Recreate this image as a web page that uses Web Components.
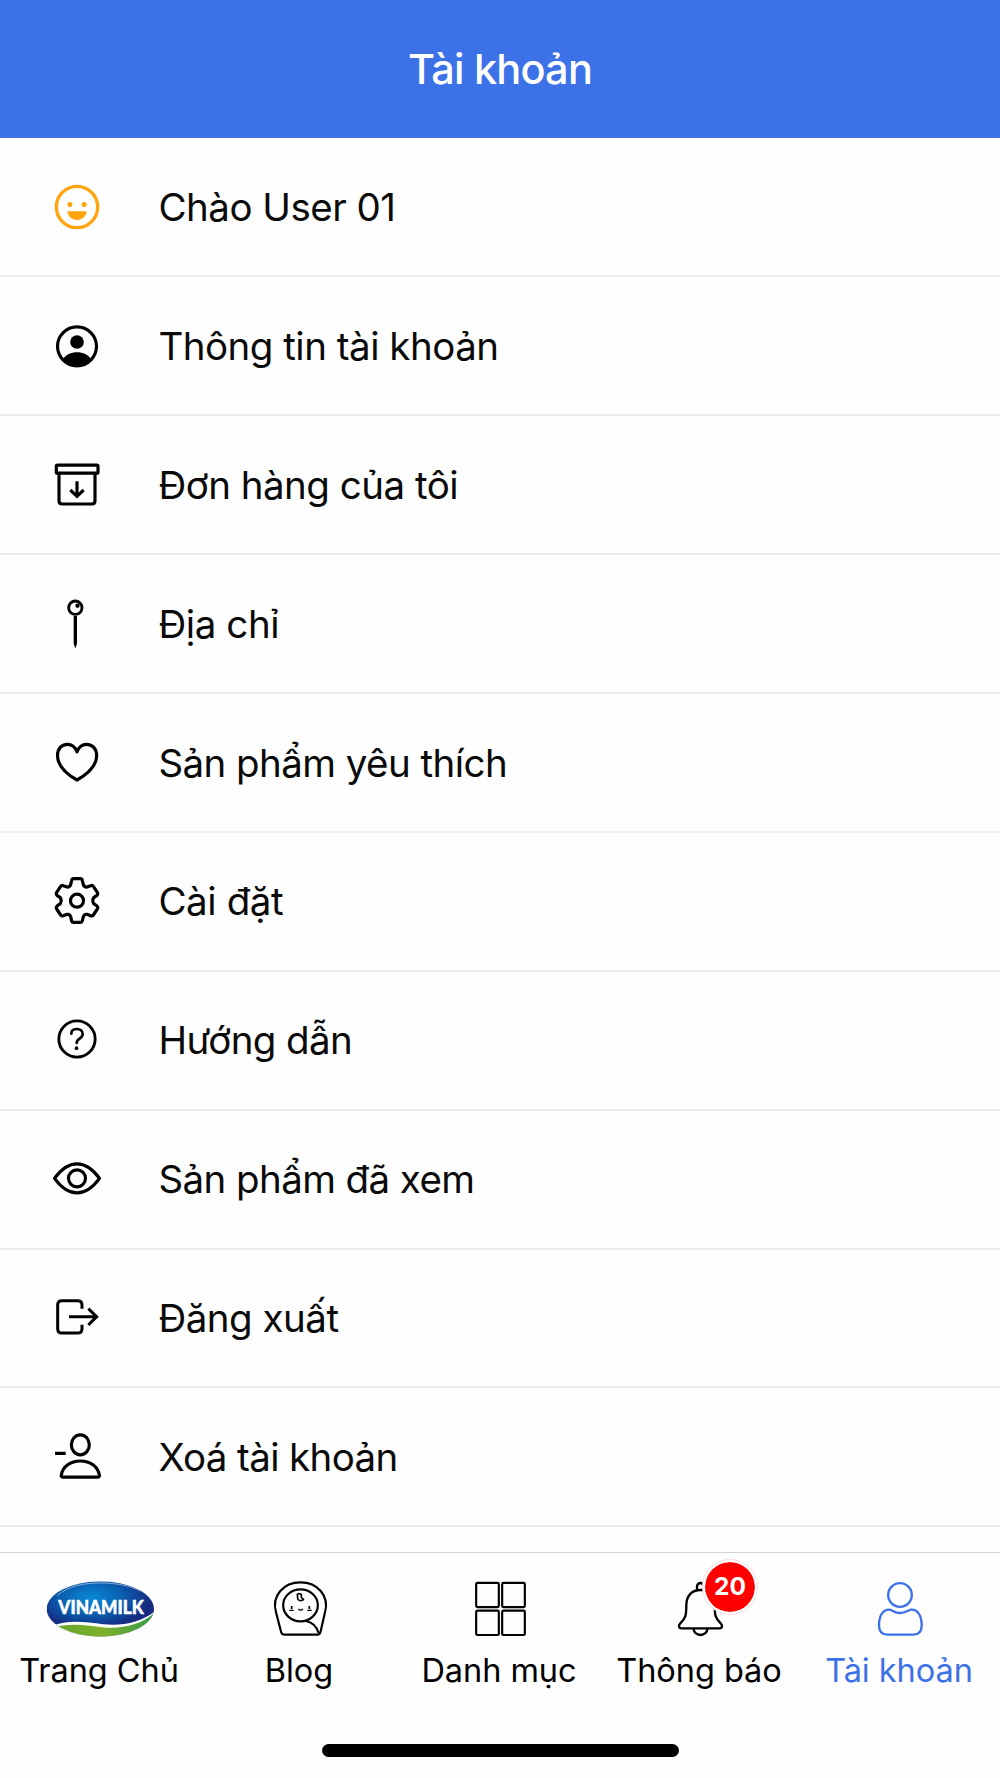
<!DOCTYPE html>
<html lang="vi">
<head>
<meta charset="UTF-8">
<title>Tài khoản</title>
<style>
    body {
        margin: 0;
        background: #fefefe;
        color: #0a0a0a;
        font-family: Inter, "Noto Sans", sans-serif;
    }
</style>
</head>
<body>
<account-screen></account-screen>

<script>
const MENU_ICONS = {
    smile: `<svg viewBox="51 49 180 180"><circle cx="141" cy="139" r="62" stroke-width="10"/><g fill="currentColor" stroke="none"><circle cx="119.5" cy="131.5" r="7.5"/><circle cx="162.5" cy="131.5" r="7.5"/><path d="M112 152H170C168 168 157 178 141 178S114 168 112 152Z"/></g></svg>`,
    profile: `<svg viewBox="51 466 180 180"><circle cx="141" cy="557" r="58.5" stroke-width="9.5"/><g fill="currentColor" stroke="none"><circle cx="141" cy="544" r="20.5"/><path d="M98 597C108 581 123 575 141 575S174 581 184 597A59 59 0 0 1 98 597Z"/></g></svg>`,
    archive: `<svg viewBox="51 73 180 180"><g stroke-width="9.5"><rect x="79" y="103.5" width="125" height="24" rx="3"/><path d="M87 129V210Q87 220 97 220H185Q195 220 195 210V129M141 152V196M121 178L141 197L161 178"/></g></svg>`,
    pin: `<svg viewBox="51 490 180 180"><circle cx="136" cy="531" r="20" stroke-width="8.5"/><g fill="currentColor" stroke="none"><circle cx="142.5" cy="525" r="6.5"/><path d="M131 556H141V640L136 653L131 640Z"/></g></svg>`,
    heart: `<svg viewBox="51 67.5 180 180"><path stroke-width="9.5" stroke-linejoin="round" d="M141 208.5C110 191 82.5 166 82.5 135C82.5 115 95 101.5 112 101.5C125 101.5 135 108 141 124C147 108 157 101.5 170 101.5C187 101.5 200 115 200 135C200 166 172 191 141 208.5Z"/></svg>`,
    gear: `<svg viewBox="51 485 180 180"><g stroke-width="9.5" stroke-linejoin="round"><circle cx="141" cy="574" r="19.5"/><path d="M131 508H151Q156 508 157 513L160 526Q163 534 171 533L182 529Q187 527 190 531L202 549Q205 554 201 558L191 565Q186 573 191 583L201 590Q205 594 202 599L190 617Q187 621 182 619L171 615Q163 614 160 622L157 635Q156 639 151 639H131Q126 639 125 635L122 622Q119 614 111 615L100 619Q95 621 92 617L80 599Q77 594 81 590L91 583Q96 573 91 565L81 558Q77 554 80 549L92 531Q95 527 100 529L111 533Q119 534 122 526L125 513Q126 508 131 508Z"/></g></svg>`,
    help: `<svg viewBox="51 62 180 180"><circle cx="141" cy="149" r="54.5" stroke-width="8.5"/><path stroke-width="8" stroke-linecap="round" d="M124 133C124 123 131 119 140 119C151 119 158 125 158 134C158 149 140 147 140 161"/><circle cx="139.5" cy="176.5" r="5.5" fill="currentColor" stroke="none"/></svg>`,
    eye: `<svg viewBox="51 479 180 180"><g stroke-width="9.5" stroke-linejoin="round"><path d="M73.5 567C91 543 115 523.5 141 523.5S191 543 208.5 567C191 591 167 610.5 141 610.5S91 591 73.5 567Z"/><circle cx="141" cy="567" r="25.5"/></g></svg>`,
    logout: `<svg viewBox="51 56 180 180"><g stroke-width="9"><path d="M156 118V107Q156 94 143 94H96Q83 94 83 107V178Q83 191 96 191H143Q156 191 156 178V166"/><path d="M117 142H199M175 118L200 142L175 167"/></g></svg>`,
    removeUser: `<svg viewBox="51 473 180 180"><g stroke-width="9.5" stroke-linejoin="round"><ellipse cx="151" cy="526.5" rx="27" ry="30"/><path d="M75 552H107M98 623.5C94 623.5 93 620 94 616C99 592 121 575 151 575S203 592 208 616C209 620 208 623.5 204 623.5Z"/></g></svg>`
};

const TAB_ICONS = {
    home: `<svg viewBox="120 117 360 180">
        <defs>
            <radialGradient id="blue" cx=".42" cy=".3" r=".55"><stop offset="0" stop-color="#0a8ad6"/><stop offset=".55" stop-color="#0a5cae"/><stop offset="1" stop-color="#152a80"/></radialGradient>
            <linearGradient id="green" x1="0" x2="1" y1="0" y2="0"><stop offset="0" stop-color="#62a52c"/><stop offset=".5" stop-color="#7fb02c"/><stop offset="1" stop-color="#2f9c46"/></linearGradient>
            <clipPath id="oval"><ellipse cx="301" cy="207" rx="161" ry="83"/></clipPath>
        </defs>
        <g clip-path="url(#oval)" stroke="none">
            <rect x="140" y="124" width="322" height="166" fill="url(#blue)"/>
            <path fill="#fff" d="M150 260C205 238 250 245 310 253C370 259 425 246 465 214V300H150Z"/>
            <path fill="url(#green)" d="M150 264C215 246 260 257 320 263C380 265 425 253 468 215V300H150Z"/>
            <path fill="none" stroke="#a9bddf" stroke-width="3" opacity=".8" d="M172 166C205 138 250 129 301 129C350 129 390 137 420 153"/>
        </g>
        <text x="175" y="222" fill="#fff" stroke="#fff" stroke-width="1.5" font-family="Lato, sans-serif" font-weight="900" font-size="54" textLength="256" lengthAdjust="spacingAndGlyphs">VINAMILK</text>
    </svg>`,
    blog: `<svg viewBox="720 117 360 180"><g stroke-width="6.5" stroke-linejoin="round"><path d="M852 284Q846 284 844 278L828 217C814 168 850 127 901.5 127S989 168 975 217L961 278Q959 284 953 284Z"/><ellipse cx="901.5" cy="196" rx="52" ry="48"/><path d="M917 243C936 246 950 261 956 279"/><path stroke-width="5" d="M892 164C895 158 906 161 904 168C903 174 908 177 911 177C908 184 897 183 894 178C892 174 893 170 892 164Z"/></g><path stroke-width="4" d="M868 211H881M922 211H935M895 207Q902 214 909 207"/><path stroke-width="5" d="M875 198V207M928 198V207"/></svg>`,
    grid: `<svg viewBox="300 117 360 180"><g stroke-width="6.5"><rect x="408.5" y="128.5" width="68" height="73" rx="4"/><rect x="486.5" y="128.5" width="68" height="73" rx="4"/><rect x="408.5" y="212" width="68" height="73" rx="4"/><rect x="486.5" y="212" width="68" height="73" rx="4"/></g></svg>`,
    bell: `<svg viewBox="-60 117 360 180"><g stroke-width="7" stroke-linejoin="round"><path d="M111 150V140A10.5 11 0 0 1 132 140V150M121.5 150C95 150 79 168 79 195C79 226 77 235 61 250C54 258 57 265 64 265H179C186 265 189 258 182 250C166 235 164 226 164 195C164 168 148 150 121.5 150ZM101 267A20.5 18 0 0 0 142 267"/></g></svg>`,
    user: `<svg viewBox="540 117 360 180"><g stroke-width="7"><circle cx="720" cy="165" r="35.5"/><path d="M687 209C668 209 657 228 657 256C657 275 666 284 682 284H761C777 284 785 275 785 256C785 228 774 209 755 209C745 209 738 219 720 219S697 209 687 209Z"/></g></svg>`
};

class AppHeader extends HTMLElement {
    connectedCallback() {
        this.attachShadow({ mode: 'open' });
        this.shadowRoot.innerHTML = `
            <style>
                :host {
                    display: flex;
                    align-items: center;
                    justify-content: center;
                    box-sizing: border-box;
                    height: 138.4px;
                    background: #3d71e7;
                    color: #fff;
                }

                h1 {
                    margin: 0;
                    font-size: 41.5px;
                    line-height: 50px;
                    font-weight: 500;
                    letter-spacing: -0.8px;
                }
            </style>
            <h1><slot></slot></h1>
        `;
    }
}

class MenuItem extends HTMLElement {
    connectedCallback() {
        this.attachShadow({ mode: 'open' });
        this.shadowRoot.innerHTML = `
            <style>
                :host {
                    display: flex;
                    align-items: center;
                    gap: 51.4px;
                    box-sizing: border-box;
                    height: 138.95px;
                    padding: 0.6px 0 0 47px;
                    border-bottom: 2px solid #ebefef;
                }

                svg {
                    display: block;
                    width: 60px;
                    height: 60px;
                    fill: none;
                    stroke: currentColor;
                }

                .icon {
                    color: var(--icon-color, #000);
                }

                .label {
                    font-size: 38.5px;
                    line-height: 48px;
                    white-space: nowrap;
                    letter-spacing: var(--track, -0.5px);
                }
            </style>
            <div class="icon">${MENU_ICONS[this.getAttribute('icon')]}</div>
            <div class="label"><slot></slot></div>
        `;
    }
}

class TabItem extends HTMLElement {
    connectedCallback() {
        const badge = this.getAttribute('badge');
        this.attachShadow({ mode: 'open' });
        this.shadowRoot.innerHTML = `
            <style>
                :host {
                    display: flex;
                    flex-direction: column;
                    align-items: center;
                    gap: 12px;
                    color: #000;
                }

                :host([active]) {
                    color: #3d71e7;
                }

                .icon {
                    position: relative;
                    width: 120px;
                    height: 60px;
                }

                svg {
                    display: block;
                    width: 120px;
                    height: 60px;
                    fill: none;
                    stroke: currentColor;
                }

                .badge {
                    position: absolute;
                    left: 63px;
                    top: -19.4px;
                    width: 50px;
                    height: 50px;
                    border: 2px solid #fff;
                    border-radius: 50%;
                    box-shadow: 0 0 0 1px #fbdcdc;
                    background: red;
                    background-clip: padding-box;
                    color: #fff;
                    font-size: 24.5px;
                    font-weight: 700;
                    line-height: 49px;
                    text-align: center;
                }

                .label {
                    padding-right: 2px;
                    font-size: 32.5px;
                    line-height: 40px;
                    white-space: nowrap;
                    letter-spacing: -0.05px;
                }
            </style>
            <div class="icon">
                ${TAB_ICONS[this.getAttribute('icon')]}
                ${badge ? `<span class="badge">${badge}</span>` : ''}
            </div>
            <div class="label"><slot></slot></div>
        `;
    }
}

class TabBar extends HTMLElement {
    connectedCallback() {
        this.attachShadow({ mode: 'open' });
        this.shadowRoot.innerHTML = `
            <style>
                :host {
                    display: flex;
                    flex-direction: column;
                    align-items: center;
                    justify-content: space-between;
                    box-sizing: border-box;
                    height: 226px;
                    padding: 26px 0 21px;
                    border-top: 1px solid #d4d4d4;
                    background: #fefefe;
                }

                nav {
                    display: grid;
                    grid-template-columns: repeat(5, 200px);
                }

                .home-indicator {
                    width: 357px;
                    height: 13px;
                    border-radius: 7px;
                    background: #000;
                }
            </style>
            <nav><slot></slot></nav>
            <div class="home-indicator"></div>
        `;
    }
}

class AccountScreen extends HTMLElement {
    connectedCallback() {
        this.attachShadow({ mode: 'open' });
        this.shadowRoot.innerHTML = `
            <style>
                :host {
                    display: flex;
                    flex-direction: column;
                    width: 1000px;
                    height: 1778px;
                    overflow: hidden;
                }

                main {
                    flex: 1;
                    min-height: 0;
                    margin-top: -0.4px;
                    overflow: hidden;
                }
            </style>
            <app-header>Tài khoản</app-header>
            <main>
                <menu-item icon="smile" style="--icon-color: #ffa40d">Chào User 01</menu-item>
                <menu-item icon="profile">Thông tin tài khoản</menu-item>
                <menu-item icon="archive">Đơn hàng của tôi</menu-item>
                <menu-item icon="pin" style="--track: -0.4px">Địa chỉ</menu-item>
                <menu-item icon="heart" style="--track: -0.56px">Sản phẩm yêu thích</menu-item>
                <menu-item icon="gear" style="--track: -0.4px">Cài đặt</menu-item>
                <menu-item icon="help" style="--track: -0.6px">Hướng dẫn</menu-item>
                <menu-item icon="eye" style="--track: -0.58px">Sản phẩm đã xem</menu-item>
                <menu-item icon="logout">Đăng xuất</menu-item>
                <menu-item icon="removeUser" style="--track: -0.62px">Xoá tài khoản</menu-item>
            </main>
            <tab-bar>
                <tab-item icon="home">Trang Chủ</tab-item>
                <tab-item icon="blog">Blog</tab-item>
                <tab-item icon="grid">Danh mục</tab-item>
                <tab-item icon="bell" badge="20">Thông báo</tab-item>
                <tab-item icon="user" active>Tài khoản</tab-item>
            </tab-bar>
        `;
    }
}

customElements.define('app-header', AppHeader);
customElements.define('menu-item', MenuItem);
customElements.define('tab-item', TabItem);
customElements.define('tab-bar', TabBar);
customElements.define('account-screen', AccountScreen);
</script>
</body>
</html>
